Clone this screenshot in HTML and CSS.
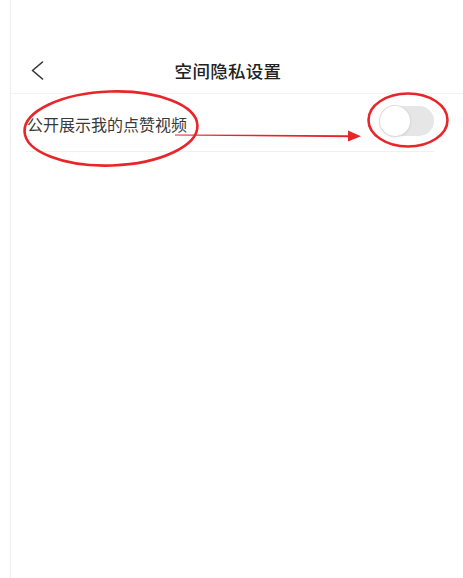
FILE: index.html
```html
<!DOCTYPE html>
<html lang="zh-CN">
<head>
  <meta charset="UTF-8" />
  <meta name="viewport" content="width=device-width, initial-scale=1.0"/>
  <title>空间隐私设置</title>
  <link rel="stylesheet" href="styles.css">
</head>
<body>
  <div class="page">
    <div class="header">
      <button class="btn-back" aria-label="返回">
        <svg width="13" height="19" viewBox="0 0 13 19">
          <polyline points="11.5,1 1.5,9.5 11.5,18" fill="none" stroke="#333" stroke-width="1.6" stroke-linecap="round" stroke-linejoin="round"/>
        </svg>
      </button>
      <h1 class="title">空间隐私设置</h1>
      <div class="header-spacer"></div>
    </div>

    <div class="setting-row">
      <span class="setting-label">公开展示我的点赞视频</span>
      <label class="switch">
        <input type="checkbox" />
        <span class="knob"></span>
      </label>
    </div>
  </div>

  <!-- red hand-drawn marks over the screenshot -->
  <svg class="marks" width="463" height="578" viewBox="0 0 463 578">
    <ellipse cx="111" cy="128.5" rx="86.5" ry="37" fill="none" stroke="#e8262a" stroke-width="2.6" transform="rotate(-2 111 128.5)"/>
    <ellipse cx="408" cy="120" rx="39.5" ry="26.5" fill="none" stroke="#e8262a" stroke-width="2.6"/>
    <path d="M175 134.4 L350 135.2 L350 137.2 L175 135.6 Z" fill="#e8262a"/>
    <polygon points="348,130.5 361,136.2 348,141.5" fill="#e8262a"/>
  </svg>
</body>
</html>
```

FILE: styles.css
```css
body {
  margin: 0;
  background: #fff;
  font-family: "Noto Sans CJK SC", "Noto Sans", sans-serif;
  position: relative;
  overflow: hidden;
}
.page {
  margin-left: 10px;
  padding-top: 47px;
  border-left: 1px solid #ededed;
  height: 100vh;
  box-sizing: border-box;
}
.header {
  display: flex;
  align-items: center;
  height: 46px;
  border-bottom: 1px solid #f3f3f3;
}
.btn-back {
  width: 40px;
  height: 46px;
  padding: 0 0 0 20px;
  border: none;
  background: none;
  display: flex;
  align-items: center;
  box-sizing: border-box;
}
.title {
  flex: 1;
  margin: 0;
  text-align: center;
  font-size: 17.5px;
  font-weight: 500;
  color: #222;
  letter-spacing: 0.3px;
}
.header-spacer { width: 58px; }

.setting-row {
  display: flex;
  align-items: center;
  justify-content: space-between;
  height: 57px;
  margin: 0 29px 0 15px;
  border-bottom: 1px solid #f0f0f0;
}
.setting-label {
  font-size: 16px;
  color: #3a3a3a;
  padding-left: 1px;
  margin-top: 2px;
}
.switch {
  position: relative;
  width: 54px;
  height: 30px;
  margin-top: -3px;
}
.switch input { display: none; }
.switch .knob {
  position: absolute;
  inset: 0;
  background: #e6e6e6;
  border-radius: 15px;
}
.switch .knob::before {
  content: "";
  position: absolute;
  left: 0;
  top: 0;
  width: 30px;
  height: 30px;
  border-radius: 50%;
  background: #fff;
  box-shadow: 0 0 0 1px #dcdcdc, 0 1px 3px rgba(0, 0, 0, 0.15);
}

.marks {
  position: absolute;
  top: 0;
  left: 0;
  pointer-events: none;
}
```
